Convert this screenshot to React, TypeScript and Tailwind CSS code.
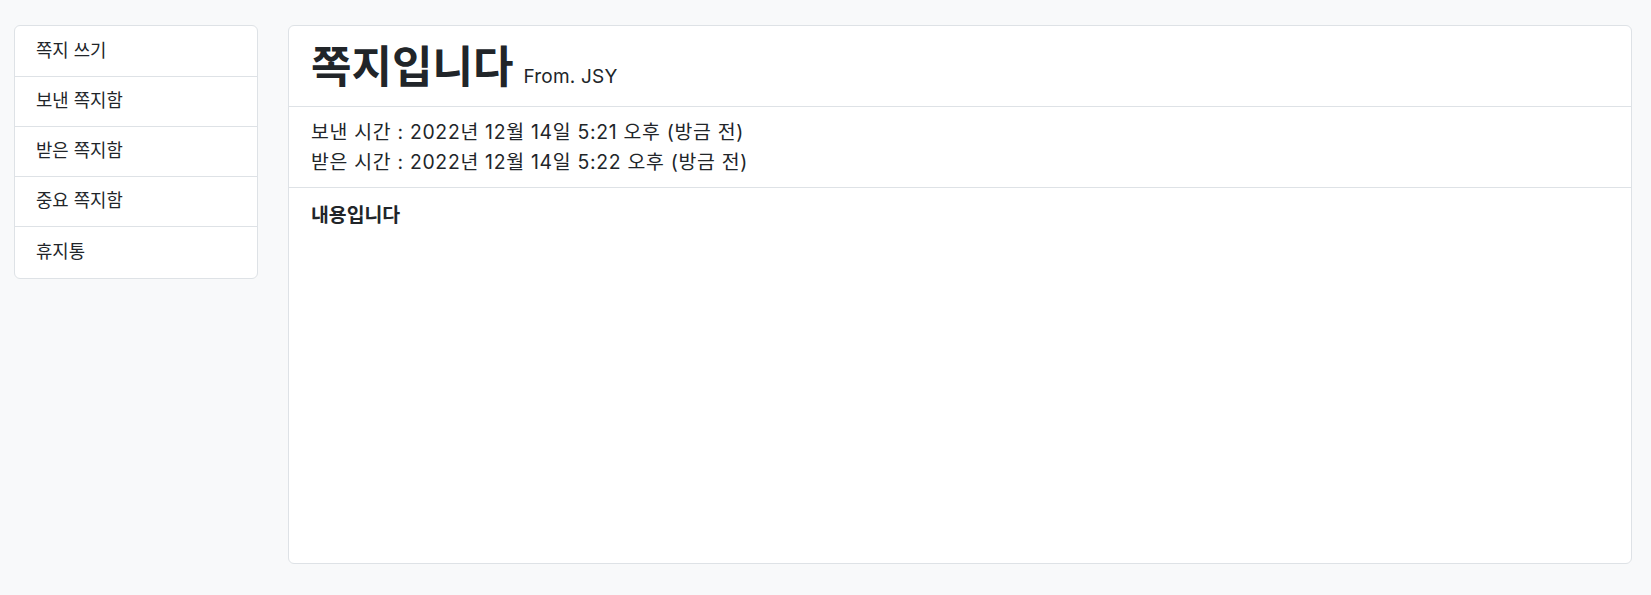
import { useState } from 'react'

const menus = ['쪽지 쓰기', '보낸 쪽지함', '받은 쪽지함', '중요 쪽지함', '휴지통']

export default function App() {
  const [active, setActive] = useState<string | null>(null)

  return (
    <div
      className="min-h-screen w-full bg-[#f8f9fa] text-[#212529] pt-[25px] pl-[14px] pr-[19px]"
      style={{ fontFamily: 'Inter, "Noto Sans CJK KR", sans-serif' }}
    >
      <div className="flex items-start gap-[30px]">
        {/* Sidebar */}
        <ul className="w-[244px] shrink-0 rounded-[6px] border border-[#dee2e6] bg-white overflow-hidden">
          {menus.map((menu, i) => (
            <li
              key={menu}
              onClick={() => setActive(menu)}
              className={`flex items-center px-[21px] text-[17.8px] cursor-pointer ${
                i === 0 || i === menus.length - 1 ? 'h-[51px]' : 'h-[50px]'
              } ${i < menus.length - 1 ? 'border-b border-[#dee2e6]' : ''} ${
                active === menu ? 'bg-[#f1f3f5]' : ''
              }`}
            >
              {menu}
            </li>
          ))}
        </ul>

        {/* Message card */}
        <div className="flex-1 h-[539px] flex flex-col rounded-[6px] border border-[#dee2e6] bg-white">
          <div className="h-[81px] shrink-0 flex items-baseline gap-[10px] px-[22px] pt-[13px] border-b border-[#dee2e6]">
            <h1 className="text-[44px] font-bold leading-[56px]">쪽지입니다</h1>
            <span className="text-[19px] tracking-[0.2px]">From. JSY</span>
          </div>
          <div className="h-[81px] shrink-0 flex flex-col justify-center px-[22px] text-[19.4px] leading-[30px] tracking-[0.7px] border-b border-[#dee2e6]">
            <p>보낸 시간 : 2022년 12월 14일 5:21 오후 (방금 전)</p>
            <p>받은 시간 : 2022년 12월 14일 5:22 오후 (방금 전)</p>
          </div>
          <div className="flex-1 px-[22px] pt-[13px]">
            <p className="text-[19.4px] font-semibold leading-[29px]">내용입니다</p>
          </div>
        </div>
      </div>
    </div>
  )
}
